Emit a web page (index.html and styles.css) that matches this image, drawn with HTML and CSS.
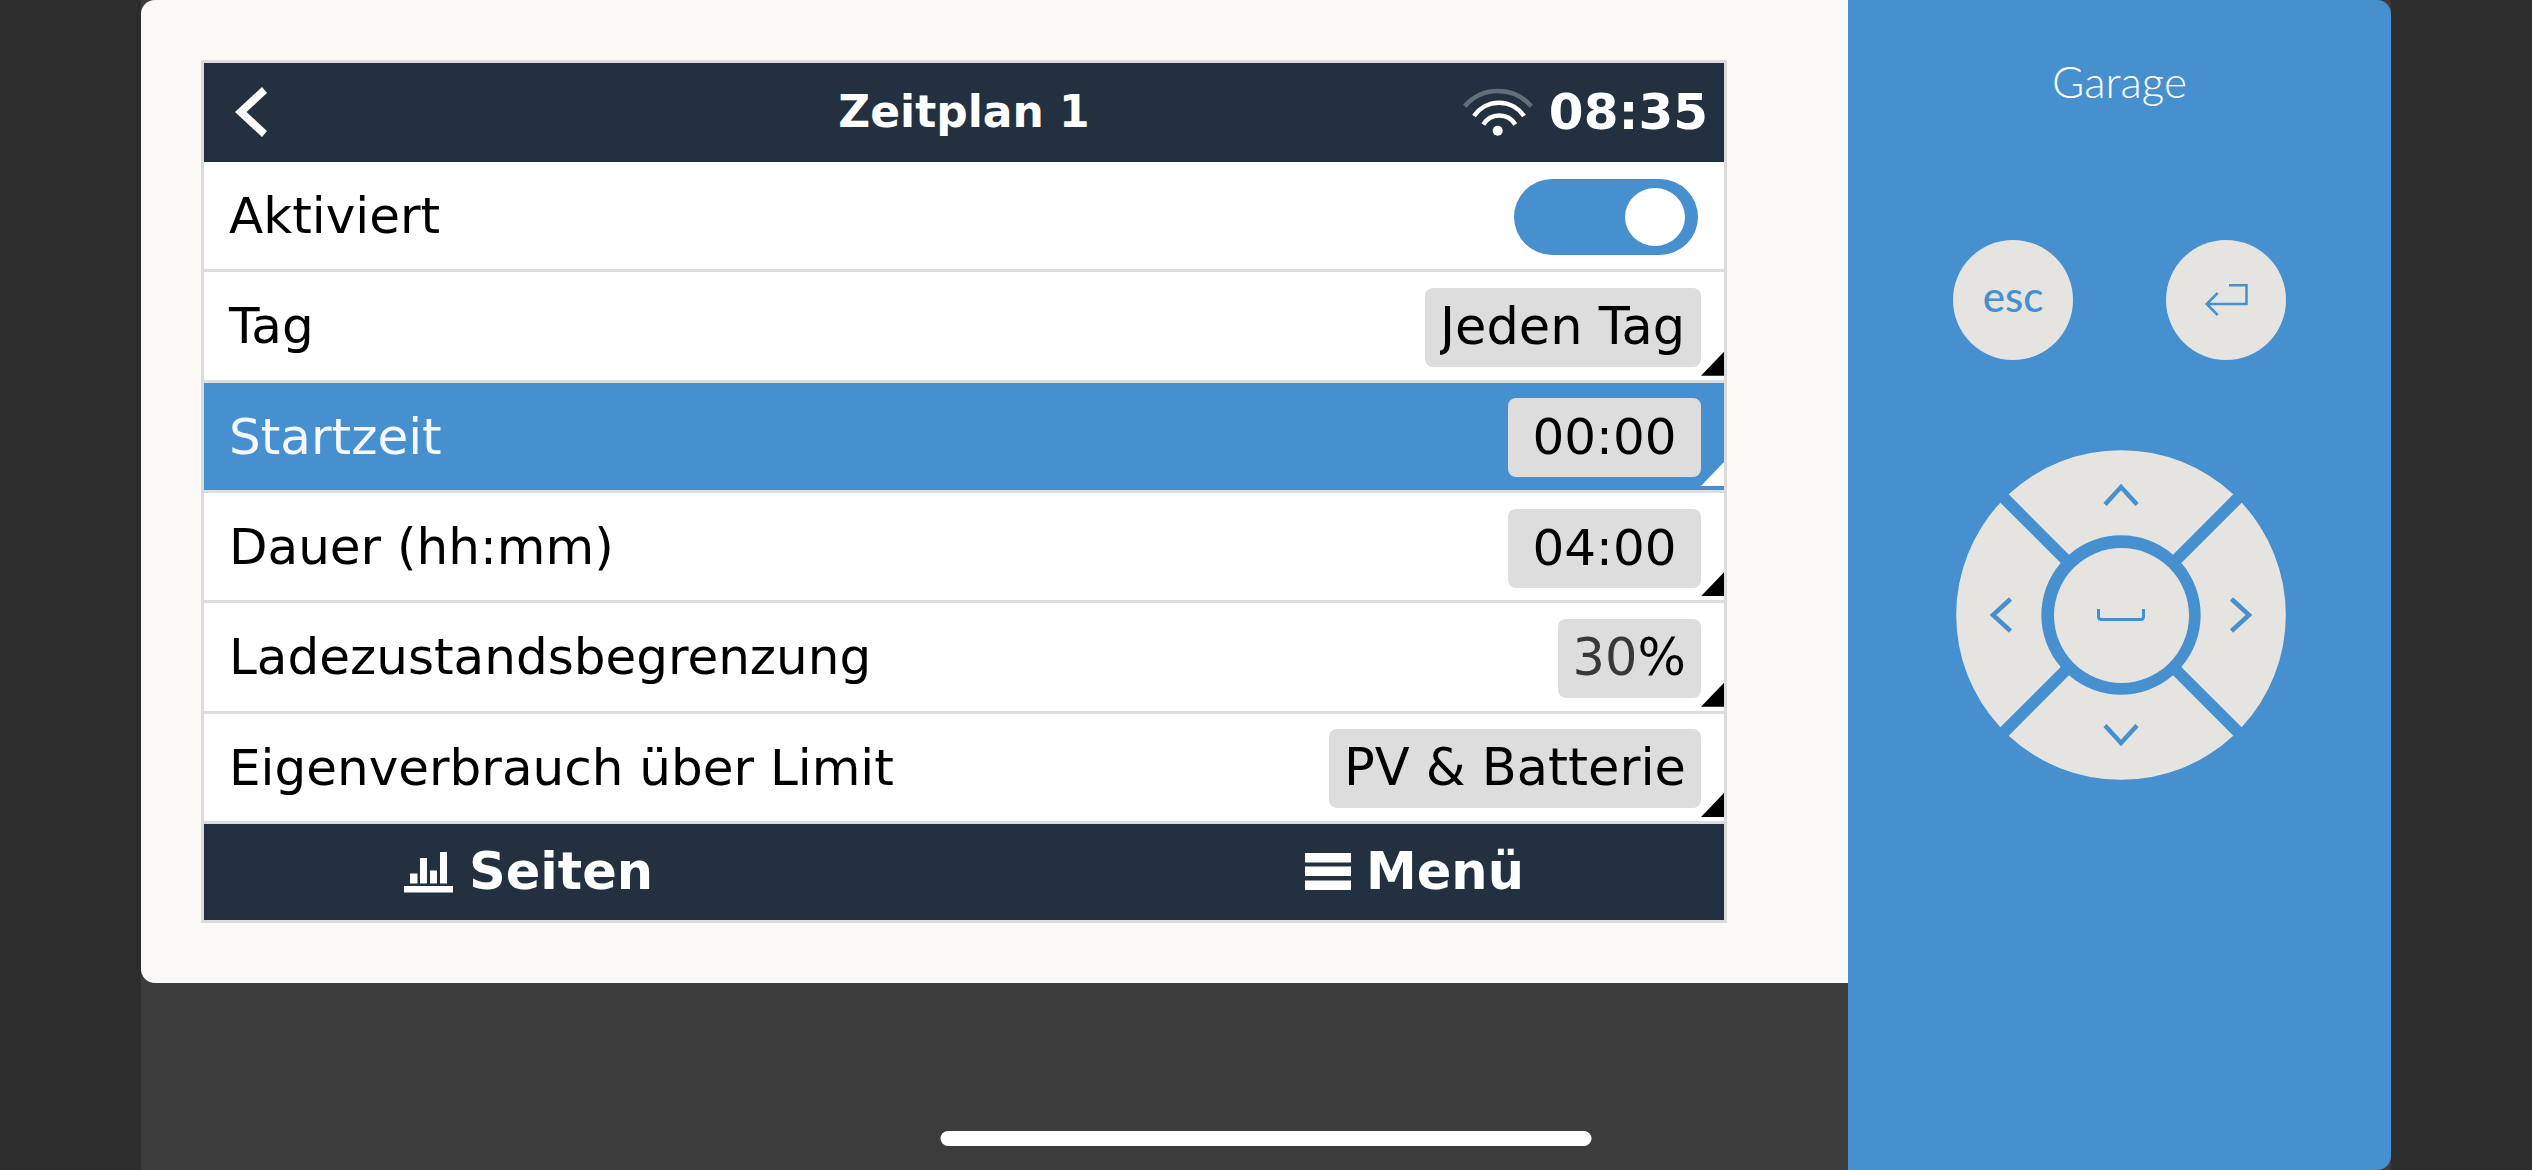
FILE: index.html
```html
<!DOCTYPE html>
<html lang="de">
<head>
<meta charset="utf-8">
<meta name="viewport" content="width=device-width, initial-scale=1">
<title>Zeitplan 1</title>
<link rel="stylesheet" href="styles.css">
</head>
<body>
<div class="device">
  <main class="bezel">
    <section class="screen">
      <header class="topbar">
        <button class="back" type="button" aria-label="Zurück">
          <svg width="32" height="50" viewBox="0 0 32 50"><path fill="#fff" d="M0 25 27 0l5 6-20.500 19L32 44l-5 6z"/></svg>
        </button>
        <h1 class="title">Zeitplan 1</h1>
        <div class="status">
          <svg width="70" height="48" viewBox="0 0 70 48" fill="none" stroke="#fff" stroke-width="4.500">
            <path opacity=".3" d="M1.700 18.300A43.800 43.800 0 0 1 68.300 18.300"/>
            <path d="M11 28A30.300 30.300 0 0 1 61 28"/>
            <path d="M20.300 36.500A18.700 18.700 0 0 1 52.300 36.500"/>
            <circle cx="34.700" cy="42.700" r="5" fill="#fff" stroke="none"/>
          </svg>
          <time>08:35</time>
        </div>
      </header>

      <form class="list">
        <div class="row">
          <label for="active">Aktiviert</label>
          <input class="switch" id="active" type="checkbox" checked>
        </div>
        <div class="row row-edit">
          <label for="day">Tag</label>
          <select class="value" id="day"><option>Jeden Tag</option></select>
        </div>
        <div class="row row-edit row-selected">
          <label for="start">Startzeit</label>
          <input class="value value-time" id="start" type="text" value="00:00">
        </div>
        <div class="row row-edit">
          <label for="duration">Dauer (hh:mm)</label>
          <input class="value value-time" id="duration" type="text" value="04:00">
        </div>
        <div class="row row-edit">
          <label for="soc">Ladezustandsbegrenzung</label>
          <span class="value value-unit"><input id="soc" type="text" value="30">%</span>
        </div>
        <div class="row row-edit">
          <label for="limit">Eigenverbrauch über Limit</label>
          <select class="value" id="limit"><option>PV &amp; Batterie</option></select>
        </div>
      </form>

      <nav class="bottombar">
        <button type="button">
          <svg width="50" height="41" viewBox="0 0 50 41" fill="#fff"><path d="M0 34h49v6.500H0zM6 21.500h7.500v10H6zM16 6h7v25.500h-7zM26 18.500h7v13h-7zM36 0h7v31.500h-7z"/></svg>
          Seiten
        </button>
        <button type="button">
          <svg width="46" height="38" viewBox="0 0 46 38" fill="#fff"><path d="M0 0h46v9.500H0zM0 13.500h46V23H0zM0 27.500h46V37H0z"/></svg>
          Menü
        </button>
      </nav>
    </section>
  </main>

  <aside class="keypad">
    <h2 class="name">Garage</h2>
    <div class="keys">
      <button class="key" type="button">esc</button>
      <button class="key key-enter" type="button" aria-label="Enter">
        <svg width="120" height="120" viewBox="0 0 120 120" fill="none" stroke="#4790d0" stroke-width="2.500"><path d="M63 45.300H80.500V64H41M51.700 53 40.700 64l11 11"/></svg>
      </button>
      <div class="dpad">
        <button class="arrow up" type="button" aria-label="Nach oben"><svg viewBox="0 0 330 330"><path d="M149 54.500 165 37l16 17.500"/></svg></button>
        <button class="arrow right" type="button" aria-label="Nach rechts"><svg viewBox="0 0 330 330"><path d="M149 54.500 165 37l16 17.500"/></svg></button>
        <button class="arrow down" type="button" aria-label="Nach unten"><svg viewBox="0 0 330 330"><path d="M149 54.500 165 37l16 17.500"/></svg></button>
        <button class="arrow left" type="button" aria-label="Nach links"><svg viewBox="0 0 330 330"><path d="M149 54.500 165 37l16 17.500"/></svg></button>
        <button class="center" type="button" aria-label="Leertaste">
          <svg width="48" height="12" viewBox="0 0 48 12" fill="none" stroke="#4790d0" stroke-width="3"><path d="M1.500 0v7.500q0 3 3 3h39q3 0 3-3V0"/></svg>
        </button>
      </div>
    </div>
  </aside>
</div>
<div class="home-indicator"></div>
</body>
</html>
```
FILE: styles.css
```css
:root {
  --blue: #4790d0;
  --navy: #22303f;
  --line: #dddddd;
  --key: #e5e4e0;
}

* {
  box-sizing: border-box;
}

body {
  margin: 0;
  background: #2d2d2d;
}

button,
input,
select {
  margin: 0;
  padding: 0;
  border: 0;
  background: none;
  color: inherit;
  font: inherit;
}

svg {
  display: block;
}

.device {
  display: grid;
  grid-template-columns: 1fr 543px;
  align-items: start;
  min-height: 100vh;
  margin: 0 141px;
  background: #3c3c3c;
}

/* Display side */

.bezel {
  padding: 60px 121px 60px 60px;
  border-radius: 14px 0 0 14px;
  background: #faf9f5;
}

.screen {
  border: 3px solid #dcdbd9;
  background: #fff;
  color: #000;
  font-family: "DejaVu Sans", sans-serif;
  font-size: 50px;
  line-height: 60px;
}

.topbar {
  display: grid;
  grid-template-columns: 1fr auto 1fr;
  align-items: center;
  min-height: 99px;
  padding: 0 16px 2px;
  background: var(--navy);
  color: #fff;
  font-weight: bold;
}

.back {
  justify-self: start;
  margin-left: 15px;
}

.title {
  margin: 0;
  font-size: 44px;
}

.status {
  display: flex;
  justify-content: flex-end;
  align-items: center;
  gap: 16px;
}

.list {
  display: grid;
  grid-auto-rows: 1fr;
  min-height: 662px;
}

.row {
  position: relative;
  display: flex;
  justify-content: space-between;
  align-items: center;
  padding: 0 23px 0 25px;
  box-shadow: inset 0 -3px var(--line);
}

.row label {
  padding-bottom: 2px;
}

.row-selected {
  background: var(--blue);
}

.row-selected label {
  color: #f4f8fc;
}

.row-edit::after {
  content: "";
  position: absolute;
  right: 0;
  bottom: 7px;
  width: 23px;
  height: 24px;
  background: #000;
  clip-path: polygon(100% 0, 100% 100%, 0 100%);
}

.row-selected::after {
  background: #fff;
}

.value {
  height: 79px;
  padding: 0 15px 1px;
  border-radius: 8px;
  background: var(--line);
  color: #000;
  font-size: 51px;
  appearance: none;
}

.value-time {
  width: 193px;
  font-size: 50px;
  text-align: center;
}

.value-unit {
  display: flex;
  align-items: center;
}

.value-unit input {
  width: 65px;
  color: #383838;
}

.switch {
  display: flex;
  justify-content: flex-end;
  align-items: center;
  width: 184px;
  height: 76px;
  margin-right: 3px;
  padding-right: 13px;
  border-radius: 38px;
  background: var(--blue);
  appearance: none;
}

.switch::before {
  content: "";
  width: 60px;
  height: 58px;
  border-radius: 50%;
  background: #fff;
}

.bottombar {
  display: flex;
  justify-content: space-between;
  min-height: 96px;
  padding: 0 200px;
  background: var(--navy);
  color: #fff;
  font-size: 51px;
  font-weight: bold;
}

.bottombar button {
  display: flex;
  align-items: center;
  gap: 15px;
}

/* Keypad side */

.keypad {
  display: flex;
  flex-direction: column;
  align-items: center;
  align-self: stretch;
  gap: 132px;
  padding-top: 54px;
  border-radius: 0 14px 14px 0;
  background: var(--blue);
  font-family: Lato, sans-serif;
}

.name {
  margin: 0;
  color: #fff;
  font-size: 44px;
  font-weight: 300;
  line-height: 54px;
}

.keys {
  display: grid;
  grid-template-columns: 120px 120px;
  justify-content: space-between;
  justify-items: end;
  row-gap: 90px;
  width: 333px;
}

.key {
  width: 120px;
  height: 120px;
  padding-bottom: 8px;
  border-radius: 50%;
  background: var(--key);
  color: var(--blue);
  font-size: 42px;
  font-weight: 500;
}

.key-enter {
  padding: 0;
}

.dpad {
  grid-column: 1 / -1;
  display: grid;
  grid-template: 330px / 330px;
}

.arrow,
.center {
  grid-area: 1 / 1;
  background: var(--key);
}

.arrow {
  clip-path: path("M52.700 44.300A165 165 0 0 1 277.300 44.300L217 104.700A79.500 79.500 0 0 0 113 104.700Z");
}

.arrow path {
  fill: none;
  stroke: var(--blue);
  stroke-width: 4.500;
}

.right {
  transform: rotate(90deg);
}

.down {
  transform: rotate(180deg);
}

.left {
  transform: rotate(270deg);
}

.center {
  display: grid;
  place-items: center;
  place-self: center;
  width: 135px;
  height: 135px;
  border-radius: 50%;
}

.home-indicator {
  position: fixed;
  bottom: 24px;
  left: 50%;
  width: 651px;
  height: 15px;
  border-radius: 8px;
  background: #fff;
  transform: translateX(-50%);
}
```
